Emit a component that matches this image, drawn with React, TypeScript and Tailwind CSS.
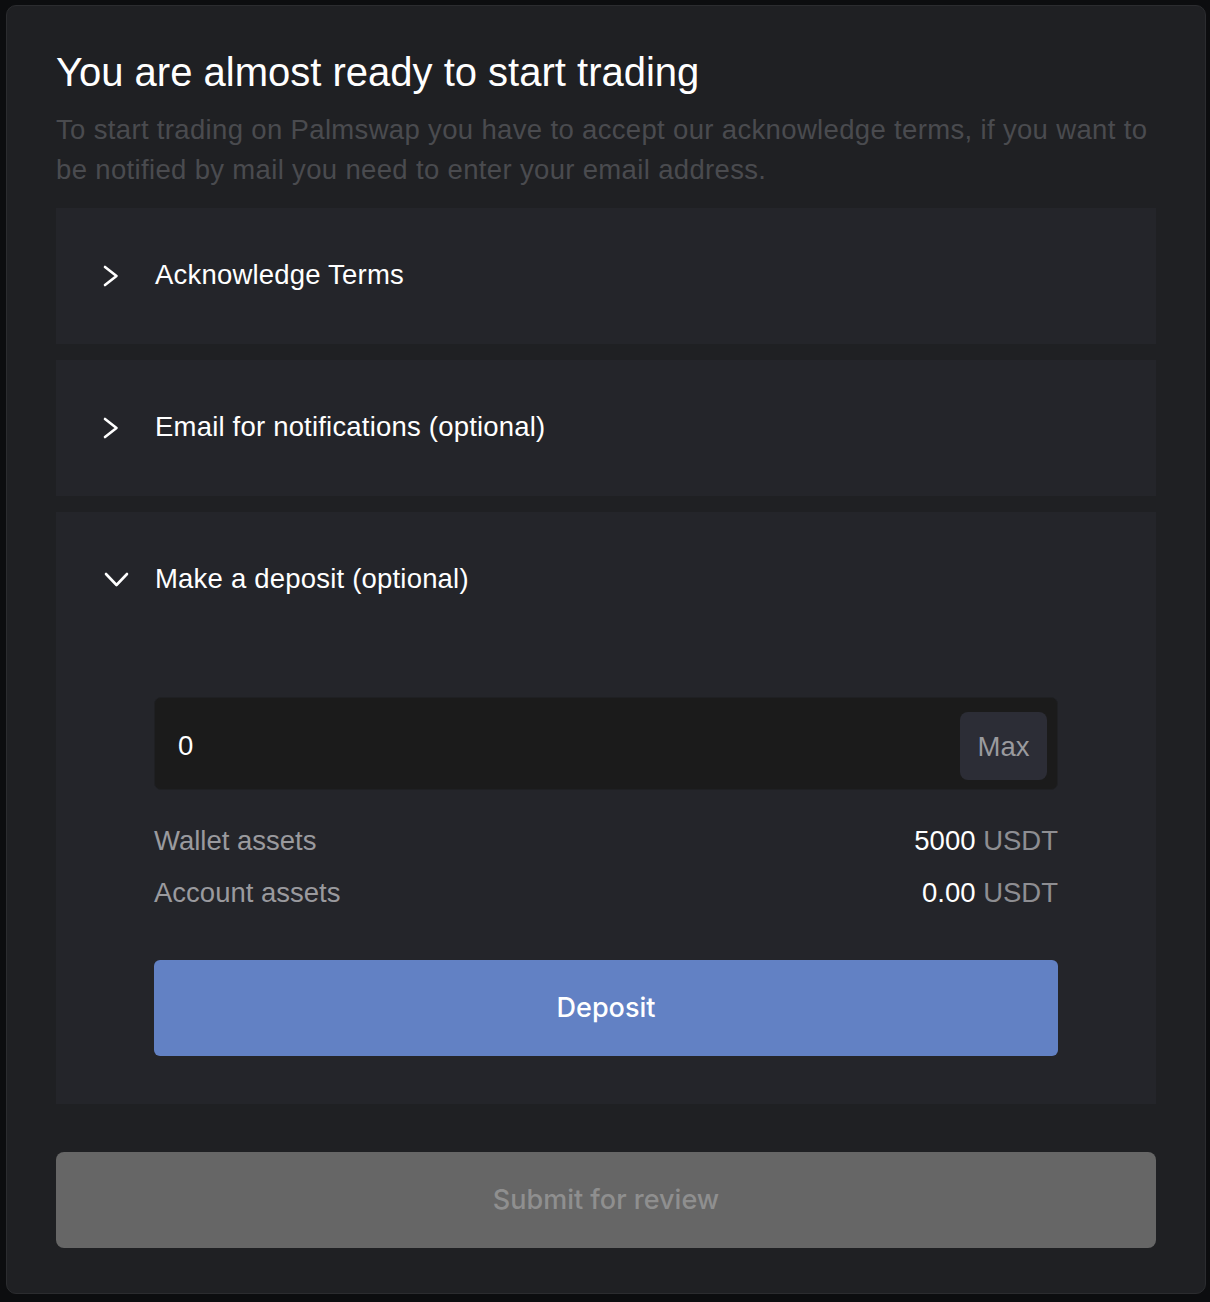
import { useState } from "react";

const font = { fontFamily: '"Liberation Sans", Arial, Helvetica, sans-serif' };
const buttonFont = { fontFamily: 'Inter, "Liberation Sans", Arial, sans-serif' };

function ChevronRight() {
  return (
    <svg width="16" height="22" viewBox="0 0 16 22" fill="none" className="shrink-0">
      <path d="M2 2 L13.5 11 L2 20" stroke="white" strokeWidth="2.6" strokeLinecap="round" strokeLinejoin="round" />
    </svg>
  );
}

function ChevronDown() {
  return (
    <svg width="26" height="16" viewBox="0 0 26 16" fill="none" className="shrink-0">
      <path d="M2 2 L12.5 13 L23 2" stroke="white" strokeWidth="2.6" strokeLinecap="round" strokeLinejoin="round" />
    </svg>
  );
}

type SectionProps = {
  title: string;
  open?: boolean;
  children?: React.ReactNode;
};

function Section({ title, open = false, children }: SectionProps) {
  return (
    <div className="bg-[#24252a]">
      <div className="flex items-center pt-[47px] pb-[49px] pl-[47px]">
        <div className="flex w-[52px] items-center">
          {open ? (
            <span className="mt-[2px] ml-[1px]">
              <ChevronDown />
            </span>
          ) : (
            <span className="mt-[2px]">
              <ChevronRight />
            </span>
          )}
        </div>
        <span className="text-[27.5px] leading-[40px] tracking-[0.2px] text-white">{title}</span>
      </div>
      {open ? children : null}
    </div>
  );
}

export default function App() {
  const [amount, setAmount] = useState("0");

  return (
    <div className="min-h-[1302px] w-[1210px] bg-[#0c0d0f] pt-[5px] pl-[6px]" style={font}>
      <div className="w-[1200px] rounded-[10px] border border-[#2b2c2f] bg-[#1f2023] px-[49px] pt-[42px] pb-[45px]">
        <h1 className="text-[40px] leading-[48px] font-normal text-white">
          You are almost ready to start trading
        </h1>
        <p className="mt-[14px] mb-[-2px] text-[27.5px] leading-[40px] tracking-[0.34px] text-[#4a4b4f]">
          To start trading on Palmswap you have to accept our acknowledge terms, if you want to be
          notified by mail you need to enter your email address.
        </p>

        <div className="mt-[20px] flex flex-col gap-[16px]">
          <Section title="Acknowledge Terms" />
          <Section title="Email for notifications (optional)" />
          <Section title="Make a deposit (optional)" open>
            <div className="px-[98px] pt-[49px] pb-[48px]">
              <div className="flex h-[93px] items-center rounded-[7px] border border-[#1f2023] bg-[#1b1b1b] pl-[23px] pr-[10px]">
                <input
                  value={amount}
                  onChange={(e) => setAmount(e.target.value)}
                  className="mt-[4px] min-w-0 flex-1 bg-transparent text-[27.5px] leading-[40px] text-white outline-none"
                  style={font}
                />
                <button className="mt-[5px] flex h-[68px] w-[87px] items-center justify-center rounded-[8px] bg-[#2c2d36] pt-[2px] text-[27.5px] text-[#9a9a9e]">
                  Max
                </button>
              </div>

              <div className="mt-[31px] flex flex-col gap-[12px] text-[27.5px] leading-[40px]">
                <div className="flex justify-between">
                  <span className="text-[#9a9a9e]">Wallet assets</span>
                  <span className="text-white">
                    5000 <span className="text-[#8e8e92]">USDT</span>
                  </span>
                </div>
                <div className="flex justify-between">
                  <span className="text-[#9a9a9e]">Account assets</span>
                  <span className="text-white">
                    0.00 <span className="text-[#8e8e92]">USDT</span>
                  </span>
                </div>
              </div>

              <button
                className="mt-[47px] flex h-[96px] w-full items-center justify-center rounded-[6px] bg-[#6281c4] text-[27px] font-medium text-white"
                style={buttonFont}
              >
                Deposit
              </button>
            </div>
          </Section>
        </div>

        <button
          disabled
          className="mt-[48px] flex h-[96px] w-full items-center justify-center rounded-[8px] bg-[#666666] text-[27px] font-medium text-[#8f8f8f]"
          style={buttonFont}
        >
          Submit for review
        </button>
      </div>
    </div>
  );
}
